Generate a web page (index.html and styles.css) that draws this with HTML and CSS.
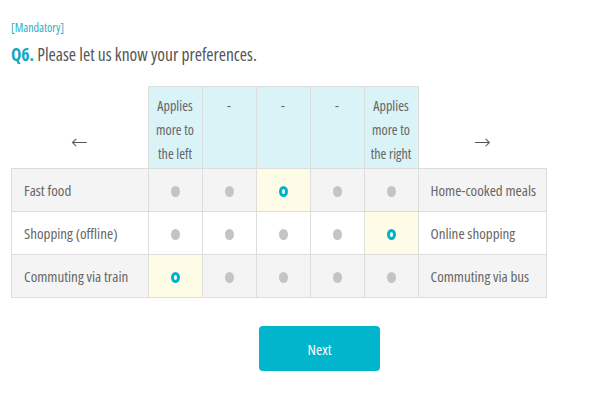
FILE: index.html
```html
<!DOCTYPE html>
<html lang="en">
<head>
    <meta charset="UTF-8">
    <meta name="viewport" content="width=device-width, initial-scale=1.0">
    <title>Survey Q6</title>
    <link rel="stylesheet" href="styles.css">
</head>
<body>

    <div class="question">
        <p class="mandatory">[Mandatory]</p>
        <h2 class="title"><span class="qnum">Q6.</span> Please let us know your preferences.</h2>

        <table class="matrix">
            <thead>
                <tr>
                    <th class="arrow">&larr;</th>
                    <th class="head">Applies more to the left</th>
                    <th class="head">-</th>
                    <th class="head">-</th>
                    <th class="head">-</th>
                    <th class="head">Applies more to the right</th>
                    <th class="arrow right">&rarr;</th>
                </tr>
            </thead>
            <tbody>
                <tr class="odd">
                    <td class="label">Fast food</td>
                    <td><span class="dot"></span></td>
                    <td><span class="dot"></span></td>
                    <td class="selected"><span class="dot on"></span></td>
                    <td><span class="dot"></span></td>
                    <td><span class="dot"></span></td>
                    <td class="label">Home-cooked meals</td>
                </tr>
                <tr>
                    <td class="label">Shopping (offline)</td>
                    <td><span class="dot"></span></td>
                    <td><span class="dot"></span></td>
                    <td><span class="dot"></span></td>
                    <td><span class="dot"></span></td>
                    <td class="selected"><span class="dot on"></span></td>
                    <td class="label">Online shopping</td>
                </tr>
                <tr class="odd">
                    <td class="label">Commuting via train</td>
                    <td class="selected"><span class="dot on"></span></td>
                    <td><span class="dot"></span></td>
                    <td><span class="dot"></span></td>
                    <td><span class="dot"></span></td>
                    <td><span class="dot"></span></td>
                    <td class="label">Commuting via bus</td>
                </tr>
            </tbody>
        </table>

        <div class="actions">
            <button class="btn">Next</button>
        </div>
    </div>

</body>
</html>
```

FILE: styles.css
```css
body {
    margin: 0;
    font-family: "Open Sans", "Noto Sans", sans-serif;
    font-stretch: 75%;
    color: #666;
    background-color: #fff;
}

.question {
    padding: 19px 0 0 11px;
}

.mandatory {
    margin: 0;
    font-size: 12px;
    color: #29aec4;
}

.title {
    margin: 6px 0 20px;
    font-size: 17.5px;
    font-weight: normal;
    color: #555;
}

.qnum {
    font-weight: bold;
    color: #11a9c2;
}

.matrix {
    border-collapse: collapse;
    font-size: 15px;
    table-layout: fixed;
}

.matrix th,
.matrix td {
    border: 1px solid #ddd;
    text-align: center;
    padding: 0;
}

.matrix th.arrow {
    border: none;
    border-bottom: 1px solid #ddd;
    width: 136px;
    font-family: "DejaVu Sans", sans-serif;
    font-stretch: normal;
    font-weight: 200;
    font-size: 20px;
    vertical-align: middle;
    padding-top: 30px;
    color: #555;
}

.matrix th.arrow.right {
    width: 128px;
}

.matrix th.head {
    width: 54px;
    height: 82px;
    background-color: #d9f3f7;
    font-weight: normal;
    font-size: 14px;
    line-height: 24px;
    vertical-align: top;
    padding: 7px 2px 0;
    box-sizing: border-box;
}

.matrix td {
    height: 42px;
}

.matrix td.label {
    text-align: left;
    padding-left: 12px;
}

.matrix tr.odd td {
    background-color: #f4f4f4;
}

.matrix tr td.selected {
    background-color: #fefbe6;
}

.dot {
    display: inline-block;
    width: 9px;
    height: 11px;
    border-radius: 50%;
    background-color: #c4c4c4;
    vertical-align: middle;
}

.dot.on {
    width: 9px;
    box-sizing: border-box;
    background-color: #fff;
    border: 3px solid #00b2cb;
}

.actions {
    margin: 28px 0 0 248px;
}

.btn {
    background-color: #00b5cc;
    color: white;
    border: none;
    width: 121px;
    height: 45px;
    font-family: inherit;
    font-stretch: 75%;
    font-size: 15px;
    border-radius: 4px;
    cursor: pointer;
}
```
